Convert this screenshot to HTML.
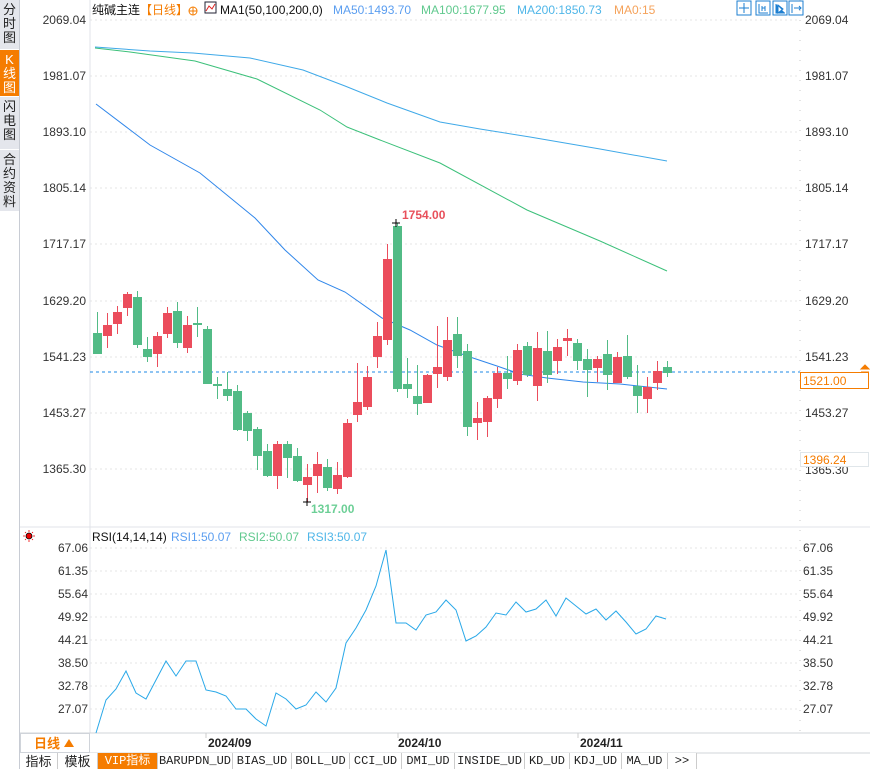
<!DOCTYPE html>
<html><head><meta charset="utf-8"><style>
*{margin:0;padding:0;box-sizing:border-box}
html,body{width:870px;height:769px;overflow:hidden}
body{background:#fff;position:relative;font-family:"Liberation Sans","Noto Sans CJK SC",sans-serif;}
.side{position:absolute;left:0;top:0;width:20px;height:769px;background:#fff;border-right:1px solid #c8ccd4}
.tab{position:absolute;left:0;width:19px;background:#e4e6ec;color:#222;font-size:13px;line-height:14px;text-align:center;border-bottom:1px solid #fff;padding-top:3px;overflow:hidden}
.tab.on{background:#f57c00;color:#fff}
.bt{position:absolute;top:753px;height:16px;font-size:12px;line-height:16px;text-align:center;border-right:1px solid #ccc;color:#222;font-family:"Liberation Mono","Noto Sans CJK SC",monospace;background:#fff;overflow:hidden}
svg text{font-family:"Liberation Sans","Noto Sans CJK SC",sans-serif}
</style></head><body>
<div class="side">
<div class="tab" style="top:0;height:50px">分<br>时<br>图</div>
<div class="tab on" style="top:50px;height:47px">K<br>线<br>图</div>
<div class="tab" style="top:97px;height:53px">闪<br>电<br>图</div>
<div class="tab" style="top:150px;height:62px">合<br>约<br>资<br>料</div>
</div>
<svg id="s" width="870" height="769" style="position:absolute;left:0;top:0">
<g id="grid" stroke="#e4e4e4" stroke-dasharray="2,3"></g>
<line x1="90" y1="0" x2="90" y2="733" stroke="#e0e3e8"/>
<line x1="800" y1="0" x2="800" y2="733" stroke="#c8c8c8" stroke-dasharray="1,9"/>
<line x1="20" y1="527" x2="870" y2="527" stroke="#e0e3e8"/>
<line x1="20" y1="733" x2="870" y2="733" stroke="#d0d4da"/>
<line x1="20" y1="753" x2="870" y2="753" stroke="#d0d4da"/>
<text x="92" y="14" font-size="12" fill="#111">纯碱主连</text>
<text x="140" y="14" font-size="12" fill="#f57c00">【日线】</text>
<circle cx="193" cy="11" r="4" fill="none" stroke="#f57c00"/><line x1="189" y1="11" x2="197" y2="11" stroke="#f57c00"/><line x1="193" y1="7" x2="193" y2="15" stroke="#f57c00"/>
<rect x="205" y="2" width="11" height="11" fill="#fff" stroke="#223"/><path d="M206 11 L209 6 L212 9 L215 4" stroke="#d22" fill="none"/>
<text x="220" y="14" font-size="12" fill="#111">MA1(50,100,200,0)</text>
<text x="333" y="14" font-size="12" fill="#5b9ef0">MA50:1493.70</text>
<text x="421" y="14" font-size="12" fill="#60c98e">MA100:1677.95</text>
<text x="517" y="14" font-size="12" fill="#4fb6e8">MA200:1850.73</text>
<text x="614" y="14" font-size="12" fill="#f5a25a">MA0:15</text>
<g fill="none" stroke="#1e7fd0"><rect x="737" y="1" width="14" height="14"/><rect x="756" y="1" width="14" height="14"/><rect x="773" y="1" width="14" height="14"/><rect x="789" y="1" width="14" height="14"/></g>
<path d="M744 3v10M739 8h10" stroke="#1e7fd0"/><path d="M759 4v9h9M762 6v5M765 6v5M762 8h3" stroke="#1e7fd0" fill="none"/><path d="M776 4v9h9M778 5l5 4-5 4z" stroke="#1e7fd0" fill="#1e7fd0"/><path d="M792 4v9M794 8h7M799 6l2 2-2 2" stroke="#1e7fd0" fill="none"/>
<g id="lab" font-size="12" fill="#333"></g>
<g id="ma" fill="none" stroke-width="1"></g>
<line x1="90" y1="372" x2="800" y2="372" stroke="#1e88e5" stroke-dasharray="3,3"/>
<g id="c"></g>
<text x="402" y="219" font-size="12" font-weight="bold" fill="#e8505b">1754.00</text>
<path d="M392 223h8M396 219v8" stroke="#000"/>
<text x="311" y="513" font-size="12" font-weight="bold" fill="#6ccf96">1317.00</text>
<path d="M303 502h8M307 498v8" stroke="#000"/>
<rect x="800.5" y="372.5" width="68" height="16" fill="#fff" stroke="#f57c00"/>
<text x="803" y="385" font-size="12" fill="#f57c00">1521.00</text>
<path d="M861 369l4-4 4 4zM861 372h8" fill="#f57c00" stroke="#f57c00"/>
<text x="805" y="474" font-size="12" fill="#333">1365.30</text>
<rect x="800.5" y="452.5" width="68" height="14" fill="#fff" stroke="#e0e6ea"/>
<text x="803" y="464" font-size="12" fill="#f57c00">1396.24</text>
<circle cx="29" cy="536" r="3" fill="#e00" stroke="#000" stroke-width="0.8"/>
<g stroke="#e00" stroke-width="0.8"><path d="M29 530v2M29 540v2M23 536h2M33 536h2M25 532l1 1M33 532l-1 1M25 540l1-1M33 540l-1-1"/></g>
<text x="92" y="541" font-size="12" fill="#111">RSI(14,14,14)</text>
<text x="171" y="541" font-size="12" fill="#5b9ef0">RSI1:50.07</text>
<text x="239" y="541" font-size="12" fill="#60c98e">RSI2:50.07</text>
<text x="307" y="541" font-size="12" fill="#4fb6e8">RSI3:50.07</text>
<polyline id="rsi" fill="none" stroke="#29a8e8"/>
<rect x="20.5" y="733.5" width="69" height="19" fill="#fff" stroke="#d0d4da"/>
<text x="34" y="748" font-size="13" font-weight="bold" fill="#f57c00">日线</text><path d="M64 747l5-8 5 8z" fill="#f57c00"/>
<line x1="206" y1="733" x2="206" y2="738" stroke="#ccc"/><line x1="398" y1="733" x2="398" y2="738" stroke="#ccc"/><line x1="578" y1="733" x2="578" y2="738" stroke="#ccc"/>
<text x="208" y="747" font-size="12" font-weight="bold" fill="#222">2024/09</text>
<text x="398" y="747" font-size="12" font-weight="bold" fill="#222">2024/10</text>
<text x="580" y="747" font-size="12" font-weight="bold" fill="#222">2024/11</text>
</svg>
<div class="bt" style="left:20px;width:38px;font-family:'Noto Sans CJK SC',sans-serif;font-size:13px">指标</div>
<div class="bt" style="left:58px;width:40px;font-family:'Noto Sans CJK SC',sans-serif;font-size:13px">模板</div>
<div class="bt" style="left:98px;width:60px;background:#f57c00;color:#fff">VIP指标</div>
<div class="bt" style="left:158px;width:75px">BARUPDN_UD</div>
<div class="bt" style="left:233px;width:59px">BIAS_UD</div>
<div class="bt" style="left:292px;width:58px">BOLL_UD</div>
<div class="bt" style="left:350px;width:52px">CCI_UD</div>
<div class="bt" style="left:402px;width:53px">DMI_UD</div>
<div class="bt" style="left:455px;width:70px">INSIDE_UD</div>
<div class="bt" style="left:525px;width:45px">KD_UD</div>
<div class="bt" style="left:570px;width:52px">KDJ_UD</div>
<div class="bt" style="left:622px;width:46px">MA_UD</div>
<div class="bt" style="left:668px;width:29px">&gt;&gt;</div>
<script>
var NS="http://www.w3.org/2000/svg";
function el(p,t,a){var e=document.createElementNS(NS,t);for(var k in a)e.setAttribute(k,a[k]);document.getElementById(p).appendChild(e);return e;}
var pl=[[20,"2069.04"],[76,"1981.07"],[132,"1893.10"],[188,"1805.14"],[244,"1717.17"],[301,"1629.20"],[357,"1541.23"],[413,"1453.27"],[469,"1365.30"]];
pl.forEach(function(p){el("grid","line",{x1:90,x2:800,y1:p[0],y2:p[0]});el("lab","text",{x:86,y:p[0]+4,"text-anchor":"end"}).textContent=p[1];if(p[0]!=469){el("lab","text",{x:805,y:p[0]+4}).textContent=p[1];}});
var rl=[[548,"67.06"],[571,"61.35"],[594,"55.64"],[617,"49.92"],[640,"44.21"],[663,"38.50"],[686,"32.78"],[709,"27.07"]];
rl.forEach(function(p){el("grid","line",{x1:90,x2:800,y1:p[0],y2:p[0]});el("lab","text",{x:88,y:p[0]+4,"text-anchor":"end"}).textContent=p[1];el("lab","text",{x:803,y:p[0]+4}).textContent=p[1];});
var C=[["g",333,354,312,354],["r",325,336,313,348],["r",312,324,306,334],["r",294,308,292,316],["g",297,345,291,348],["g",349,357,337,362],["r",336,354,332,367],["r",313,334,307,338],["g",311,343,302,348],["r",325,348,316,353],["g",323,325,307,337],["g",329,384,326,384],["g",384,386,377,399],["g",389,396,372,401],["g",391,430,385,431],["g",413,431,411,441],["g",429,456,427,470],["g",451,476,444,477],["r",444,476,441,489],["g",444,458,441,478],["g",456,481,448,482],["r",477,485,464,502],["r",464,476,452,493],["g",467,488,459,491],["r",475,489,462,494],["r",423,477,419,478],["r",402,415,363,422],["r",377,407,366,410],["r",336,357,322,368],["r",259,340,244,345],["g",226,389,223,392],["g",384,389,358,398],["g",396,404,365,415],["r",375,403,374,403],["r",367,374,326,388],["r",340,377,317,381],["g",334,356,317,368],["g",351,427,344,436],["r",418,423,402,440],["r",398,422,396,437],["r",373,399,367,408],["g",373,379,356,389],["r",350,381,344,385],["g",346,375,342,377],["r",348,386,332,401],["g",351,375,331,383],["r",347,361,339,374],["r",338,341,329,356],["g",343,361,339,370],["g",359,370,349,397],["r",359,368,356,382],["g",354,375,340,390],["r",357,383,352,383],["g",356,377,335,379],["g",386,396,365,413],["r",387,399,377,413],["r",371,383,361,390],["g",367,373,361,377]];
C.forEach(function(c,i){var x=97+i*10,col=c[0]=="r"?"#eb4d5c":"#52bb86";el("c","line",{x1:x+0.5,x2:x+0.5,y1:c[3],y2:c[4],stroke:col});el("c","rect",{x:x-4,y:c[1],width:9,height:Math.max(2,c[2]-c[1]),fill:col});});
function ml(pts,col){el("ma","polyline",{points:pts,stroke:col});}
ml("95,47 150,51 193,53 250,58 303,70 345,86 387,103 440,122 480,129 530,137 600,149 667,161","#3fa9e8");
ml("95,48 130,52 195,61 257,79 320,110 347,127 380,140 440,163 527,210 600,241 667,271","#3cc07a");
ml("96,104 150,145 200,173 255,218 285,250 318,280 345,292 382,318 410,330 437,345 470,357 497,366 520,374 547,378 583,382 620,384 667,389","#2f86ea");
document.getElementById("rsi").setAttribute("points","96,733 106,700 116,689 126,671 136,693 146,699 156,680 166,661 176,676 186,661 196,661 206,690 216,692 226,696 236,709 246,709 256,719 266,726 276,693 286,699 296,709 306,705 316,692 326,702 336,688 346,643 356,628 366,610 376,586 386,550 396,623 406,623 416,630 426,615 436,612 446,600 456,610 466,641 476,636 486,627 496,613 506,615 516,602 526,612 536,609 546,600 556,616 566,598 576,606 586,614 596,609 606,620 616,611 626,622 636,634 646,629 656,616 666,619");
</script>
</body></html>
